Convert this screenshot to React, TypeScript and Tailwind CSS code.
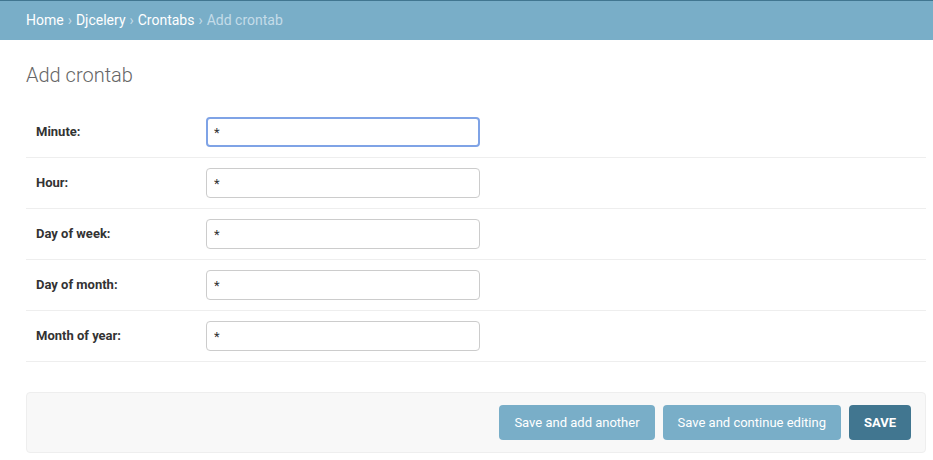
import React from 'react';

const fields = ['Minute', 'Hour', 'Day of week', 'Day of month', 'Month of year'];

export default function App() {
  return (
    <div className="min-h-[460px] bg-white font-['Roboto','Liberation_Sans',sans-serif] text-[#333]">
      {/* Breadcrumbs */}
      <div className="h-10 border-t border-[#417690] bg-[#79aec8] px-[26px] flex items-center text-[14px] text-white">
        <a className="font-normal">Home</a>
        <span className="px-[4px] text-[#c4dce8]">›</span>
        <a>Djcelery</a>
        <span className="px-[4px] text-[#c4dce8]">›</span>
        <a>Crontabs</a>
        <span className="px-[4px] text-[#c4dce8]">›</span>
        <span className="text-[#c4dce8]">Add crontab</span>
      </div>

      <div className="px-[26px] pr-[7px]">
        <h1 className="pt-[23px] pb-[20px] text-[20px] font-light leading-[24px] text-[#666]">Add crontab</h1>

        <div>
          {fields.map((f, i) => (
            <div key={f} className="flex items-center h-[51px] border-b border-[#eee] px-[10px]">
              <label className="w-[170px] text-[13px] font-bold text-[#333]">{f}:</label>
              <input
                defaultValue="*"
                className={
                  i === 0
                    ? 'w-[274px] h-[30px] rounded-[4px] border-2 border-[#7fa3e6] px-[6px] text-[13px] text-[#333] outline-none'
                    : 'w-[274px] h-[30px] rounded-[4px] border border-[#ccc] px-[7px] text-[13px] text-[#333] outline-none'
                }
              />
            </div>
          ))}
        </div>

        <div className="mt-[30px] flex justify-end gap-[8px] rounded-[4px] border border-[#eee] bg-[#f8f8f8] px-[14px] py-[12px]">
          <button className="h-[35px] rounded-[4px] bg-[#79aec8] px-[15px] text-[13px] text-white">Save and add another</button>
          <button className="h-[35px] rounded-[4px] bg-[#79aec8] px-[15px] text-[13px] text-white">Save and continue editing</button>
          <button className="h-[35px] rounded-[4px] bg-[#417690] px-[15px] text-[13px] font-bold text-white">SAVE</button>
        </div>
      </div>
    </div>
  );
}
